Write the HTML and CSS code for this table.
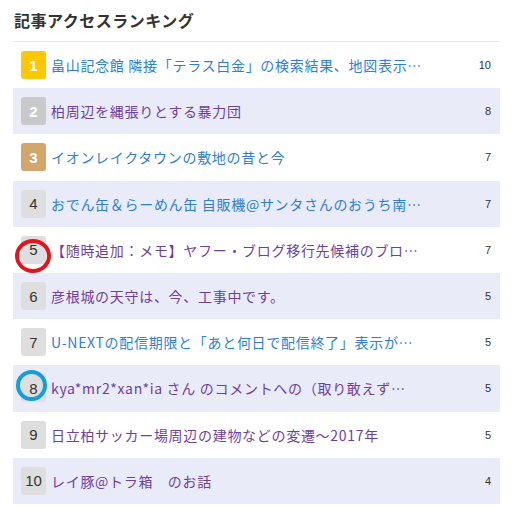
FILE: index.html
```html
<!DOCTYPE html>
<html lang="ja">
<head>
<meta charset="utf-8">
<link rel="stylesheet" href="styles.css">
</head>
<body>
<div class="widget">
  <h2 class="title">記事アクセスランキング</h2>
  <ol class="ranking">
    <li class="row"><span class="badge gold">1</span><a class="link" href="#">畠山記念館 隣接「テラス白金」の検索結果、地図表示…</a><span class="count">10</span></li>
    <li class="row alt"><span class="badge silver">2</span><a class="link visited" href="#">柏周辺を縄張りとする暴力団</a><span class="count">8</span></li>
    <li class="row"><span class="badge bronze">3</span><a class="link" href="#">イオンレイクタウンの敷地の昔と今</a><span class="count">7</span></li>
    <li class="row alt"><span class="badge plain">4</span><a class="link" href="#">おでん缶＆らーめん缶 自販機@サンタさんのおうち南…</a><span class="count">7</span></li>
    <li class="row"><span class="badge plain">5</span><a class="link visited" href="#">【随時追加：メモ】ヤフー・ブログ移行先候補のブロ…</a><span class="count">7</span><span class="mark red"></span></li>
    <li class="row alt"><span class="badge plain">6</span><a class="link visited" href="#">彦根城の天守は、今、工事中です。</a><span class="count">5</span></li>
    <li class="row"><span class="badge plain">7</span><a class="link" href="#">U-NEXTの配信期限と「あと何日で配信終了」表示が…</a><span class="count">5</span></li>
    <li class="row alt"><span class="badge plain">8</span><a class="link visited" href="#">kya*mr2*xan*ia さん のコメントへの（取り敢えず…</a><span class="count">5</span><span class="mark blue"></span></li>
    <li class="row"><span class="badge plain">9</span><a class="link visited" href="#">日立柏サッカー場周辺の建物などの変遷～2017年</a><span class="count">5</span></li>
    <li class="row alt"><span class="badge plain">10</span><a class="link visited" href="#">レイ豚@トラ箱　のお話</a><span class="count">4</span></li>
  </ol>
</div>
</body>
</html>
```

FILE: styles.css
```css
* { box-sizing: border-box; }
html, body { margin: 0; padding: 0; background: #fff; }
body {
  font-family: "Noto Sans CJK JP", "Noto Sans", sans-serif;
  color: #333;
}
.widget {
  width: 487px;
  margin-left: 13px;
}
.title {
  margin: 0;
  padding: 8px 0 9px 1px;
  font-size: 16px;
  line-height: 24px;
  font-weight: bold;
  letter-spacing: 0.5px;
  color: #333;
  border-bottom: 1px solid #e8e8e8;
}
.ranking {
  list-style: none;
  margin: 0;
  padding: 0;
}
.row {
  position: relative;
  display: flex;
  align-items: center;
  height: 46.2px;
  padding: 0 9px 0 8px;
  background: #fff;
}
.row.alt { background: #e9ebf8; }
.badge {
  flex: none;
  width: 25px;
  height: 28px;
  border-radius: 3px;
  display: flex;
  align-items: center;
  justify-content: center;
  font-family: "Liberation Sans", Arial, sans-serif;
  font-size: 15px;
  margin-right: 5px;
}
.badge.gold { background: #fdc800; color: #fff; font-weight: bold; }
.badge.silver { background: #c9c9c9; color: #fff; font-weight: bold; }
.badge.bronze { background: #d3a76c; color: #fff; font-weight: bold; }
.badge.plain { background: #dedede; color: #333; }
.link {
  flex: 1;
  font-size: 14px;
  line-height: 20px;
  letter-spacing: 0.7px;
  color: #2e7fd4;
  text-decoration: none;
  white-space: nowrap;
  overflow: hidden;
}
.link.visited { color: #6f3f9c; }
.count {
  flex: none;
  font-family: "Liberation Sans", Arial, sans-serif;
  font-size: 11px;
  color: #333;
  margin-left: 10px;
}
.mark {
  position: absolute;
  border-radius: 50%;
  pointer-events: none;
}
.mark.red {
  left: 2px;
  top: 12px;
  width: 36px;
  height: 34px;
  border: 4px solid #e3141c;
}
.mark.blue {
  left: 3px;
  top: 5px;
  width: 31px;
  height: 31px;
  border: 4px solid #109fdc;
}
```
